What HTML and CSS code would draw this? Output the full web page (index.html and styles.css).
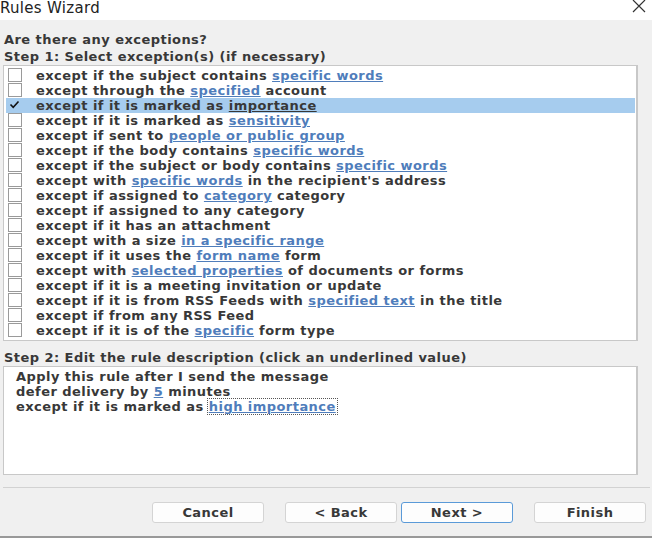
FILE: index.html
```html
<!DOCTYPE html>
<html lang="en">
<head>
  <meta charset="UTF-8" />
  <title>Rules Wizard</title>
  <link rel="stylesheet" href="styles.css">
</head>
<body>
  <div class="titlebar">
    <span class="title">Rules Wizard</span>
    <svg class="close" width="14" height="14" viewBox="0 0 14 14"><path d="M1 1 L13 13 M13 1 L1 13" stroke="#333" stroke-width="1.2" fill="none"/></svg>
  </div>

  <div class="content">
    <div class="question">Are there any exceptions?</div>
    <div class="label">Step 1: Select exception(s) (if necessary)</div>

    <div class="listbox">
      <div class="row"><span class="box"></span>except if the subject contains <a>specific words</a></div>
      <div class="row"><span class="box"></span>except through the <a>specified</a> account</div>
      <div class="row selected"><span class="box checked"><svg width="11" height="11" viewBox="0 0 11 11"><path d="M1.5 5.5 L4.2 8.3 L9.5 2.5" stroke="#111" stroke-width="1.6" fill="none"/></svg></span>except if it is marked as <a class="dark">importance</a></div>
      <div class="row"><span class="box"></span>except if it is marked as <a>sensitivity</a></div>
      <div class="row"><span class="box"></span>except if sent to <a>people or public group</a></div>
      <div class="row"><span class="box"></span>except if the body contains <a>specific words</a></div>
      <div class="row"><span class="box"></span>except if the subject or body contains <a>specific words</a></div>
      <div class="row"><span class="box"></span>except with <a>specific words</a> in the recipient's address</div>
      <div class="row"><span class="box"></span>except if assigned to <a>category</a> category</div>
      <div class="row"><span class="box"></span>except if assigned to any category</div>
      <div class="row"><span class="box"></span>except if it has an attachment</div>
      <div class="row"><span class="box"></span>except with a size <a>in a specific range</a></div>
      <div class="row"><span class="box"></span>except if it uses the <a>form name</a> form</div>
      <div class="row"><span class="box"></span>except with <a>selected properties</a> of documents or forms</div>
      <div class="row"><span class="box"></span>except if it is a meeting invitation or update</div>
      <div class="row"><span class="box"></span>except if it is from RSS Feeds with <a>specified text</a> in the title</div>
      <div class="row"><span class="box"></span>except if from any RSS Feed</div>
      <div class="row"><span class="box"></span>except if it is of the <a>specific</a> form type</div>
    </div>

    <div class="label step2">Step 2: Edit the rule description (click an underlined value)</div>

    <div class="description">
      <div>Apply this rule after I send the message</div>
      <div>defer delivery by <a>5</a> minutes</div>
      <div>except if it is marked as<a class="focus">high importance</a></div>
    </div>

    <div class="separator"></div>

    <div class="buttons">
      <button>Cancel</button>
      <button>&lt; Back</button>
      <button class="default">Next &gt;</button>
      <button>Finish</button>
    </div>
  </div>
</body>
</html>
```

FILE: styles.css
```css
body {
  margin: 0;
  background: #f0f0f0;
  font-family: "DejaVu Sans", Verdana, sans-serif;
  font-size: 13px;
  letter-spacing: 0.45px;
  font-weight: bold;
  color: #383838;
  overflow: hidden;
  height: 538px;
  box-sizing: border-box;
  border-bottom: 2px solid #999;
}
.titlebar {
  height: 20px;
  background: #fff;
  display: flex;
  align-items: center;
  justify-content: space-between;
  padding: 0 6px 0 0;
}
.title {
  font-weight: normal;
  font-size: 15px;
  letter-spacing: 0.3px;
  color: #222;
  margin-top: -4px;
}
.close {
  margin-top: -8px;
}
.content {
  padding: 11px 14px 0 3px;
}
.question {
  height: 17px;
  line-height: 17px;
  padding-left: 1px;
}
.label {
  height: 17px;
  line-height: 17px;
  padding-left: 1px;
}
.listbox {
  background: #fff;
  border: 1px solid #c8c8c8;
  border-right: 2px solid #c8c8c8;
  padding: 2px 1px 2px 2px;
  height: 270px;
}
.row {
  height: 15px;
  line-height: 15px;
  white-space: nowrap;
}
.row.selected {
  background: #a6ccee;
}
.box {
  display: inline-block;
  vertical-align: -2px;
  box-sizing: border-box;
  width: 14px;
  height: 14px;
  border: 1px solid #9a9a9a;
  background: #fff;
  margin: 0 14px 0 2px;
  position: relative;
}
.box svg {
  position: absolute;
  left: 0;
  top: 0;
}
.box.checked {
  border-color: #a6ccee;
  background: transparent;
}
a {
  color: #4f7dbb;
  text-decoration: underline;
}
a.dark {
  color: #383838;
}
.step2 {
  margin-top: 8px;
}
.description {
  background: #fff;
  border: 1px solid #c8c8c8;
  border-right: 2px solid #c8c8c8;
  height: 98px;
  padding: 2px 0 7px 12px;
  line-height: 15px;
}
.focus {
  outline: 1px dotted #555;
  outline-offset: 0;
  margin-left: 4px;
  padding: 0 1px;
}
.separator {
  height: 1px;
  background: #d2d2d2;
  margin: 12px -12px 0 0;
}
.buttons {
  display: flex;
  justify-content: flex-end;
  margin: 14px -12px 0 0;
  padding-right: 4px;
}
button {
  width: 112px;
  height: 21px;
  background: #fdfdfd;
  border: 1px solid #d4d4d4;
  border-radius: 3px;
  font-family: "DejaVu Sans", Verdana, sans-serif;
  font-size: 13px;
  letter-spacing: 0.45px;
  font-weight: bold;
  color: #383838;
  margin-left: 21px;
  padding: 0;
}
button.default {
  border: 1.5px solid #5a9ad8;
  margin-left: 4px;
}
```
